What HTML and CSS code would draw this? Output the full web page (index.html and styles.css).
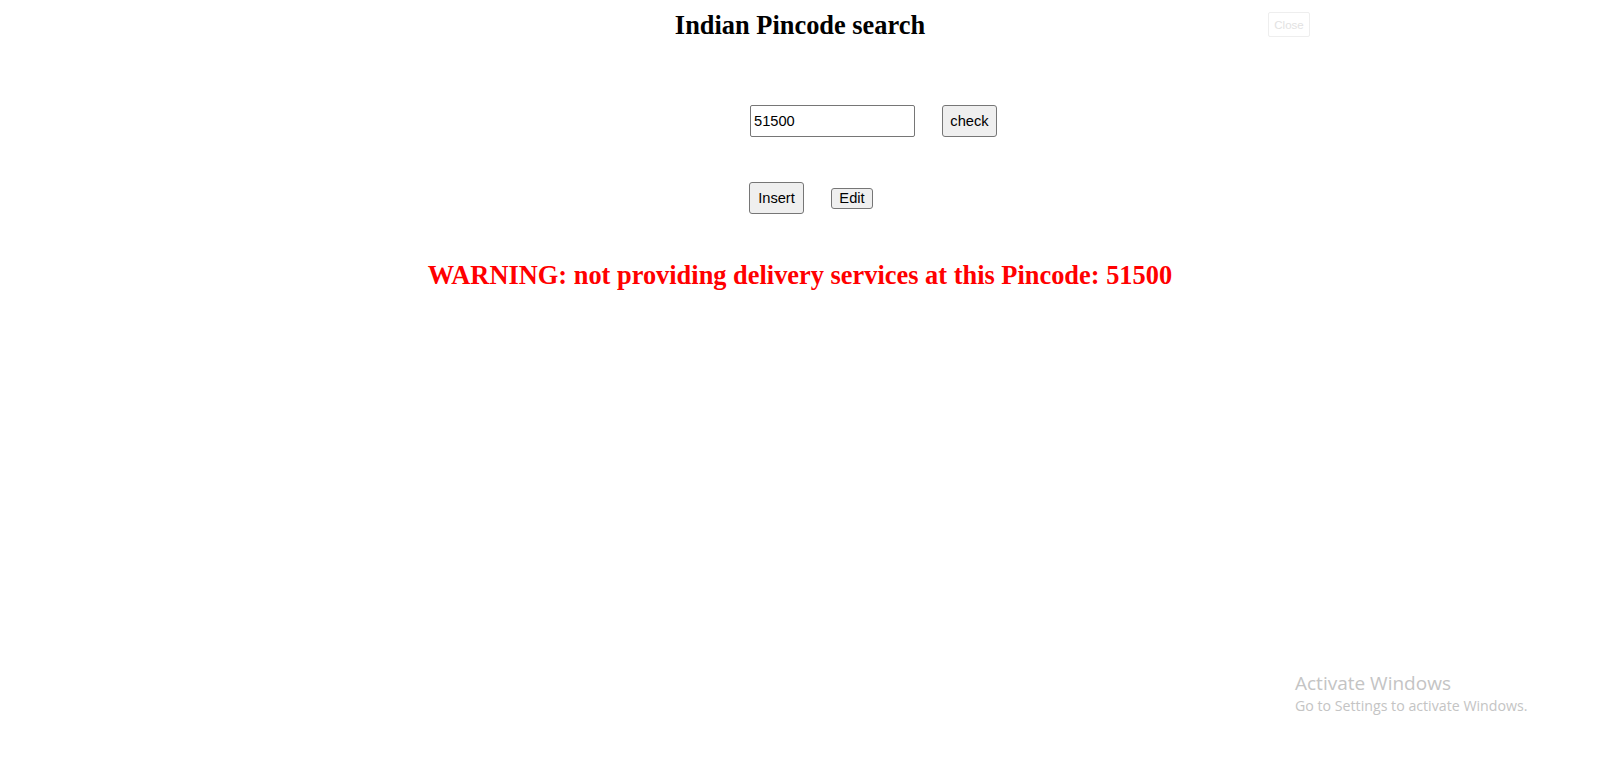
FILE: index.html
```html
<!DOCTYPE html>
<html>
<head>
<meta charset="utf-8">
<title>Indian Pincode search</title>
<link rel="stylesheet" href="styles.css">
</head>
<body>
<header class="top">
  <h2 class="title">Indian Pincode search</h2>
  <button class="close-btn" type="button">Close</button>
</header>
<main class="panel">
  <div class="row row-search">
    <input class="pin-input" type="text" value="51500">
    <button class="btn btn-big" type="button">check</button>
  </div>
  <div class="row row-actions">
    <button class="btn btn-big" type="button">Insert</button>
    <button class="btn btn-small" type="button">Edit</button>
  </div>
</main>
<h2 class="warning">WARNING: not providing delivery services at this Pincode: 51500</h2>
<div class="watermark">
  <div class="wm-title">Activate Windows</div>
  <div class="wm-sub">Go to Settings to activate Windows.</div>
</div>
</body>
</html>
```
FILE: styles.css
```css
html, body {
  margin: 0;
  padding: 0;
  background: #ffffff;
}
body {
  font-family: "Liberation Serif", "Times New Roman", serif;
  color: #000;
  width: 1600px;
  height: 757px;
  overflow: hidden;
  position: relative;
}
.top {
  position: relative;
  padding-top: 10px;
}
.title {
  margin: 0;
  font-size: 26.4px;
  line-height: 30px;
  font-weight: bold;
  text-align: center;
}
.close-btn {
  position: absolute;
  left: 1268px;
  top: 12px;
  width: 42px;
  height: 25px;
  padding: 0;
  background: #ffffff;
  border: 1px solid #eeeeee;
  border-radius: 2px;
  color: #e2e2e2;
  font-family: "Liberation Sans", Arial, sans-serif;
  font-size: 11.5px;
}
.panel {
  padding-left: 749px;
  margin-top: 65px;
  display: flex;
  flex-direction: column;
  gap: 45px;
}
.row {
  display: flex;
  align-items: center;
  gap: 27px;
}
.row-search {
  padding-left: 1px;
}
.pin-input {
  box-sizing: border-box;
  width: 165px;
  height: 32px;
  margin: 0;
  padding: 0 3px;
  border: 1px solid #767676;
  border-radius: 2px;
  font-family: "Liberation Sans", Arial, sans-serif;
  font-size: 14.67px;
  color: #000;
}
.btn {
  box-sizing: border-box;
  margin: 0;
  background: #efefef;
  border: 1px solid #767676;
  border-radius: 3px;
  font-family: "Liberation Sans", Arial, sans-serif;
  font-size: 14.67px;
  color: #000;
}
.btn-big {
  width: 55px;
  height: 32px;
  padding: 0;
}
.btn-small {
  width: 42px;
  height: 21px;
  padding: 0;
  line-height: 17px;
}
.warning {
  margin: 46px 0 0;
  font-size: 26.4px;
  line-height: 30px;
  font-weight: bold;
  color: #ff0000;
  text-align: center;
}
.watermark {
  position: absolute;
  left: 1295px;
  top: 670px;
  font-family: "Open Sans", "Noto Sans", sans-serif;
  color: #c4c4c4;
}
.wm-title {
  font-size: 19px;
  line-height: 26px;
}
.wm-sub {
  font-size: 14.2px;
  line-height: 20px;
}
```
